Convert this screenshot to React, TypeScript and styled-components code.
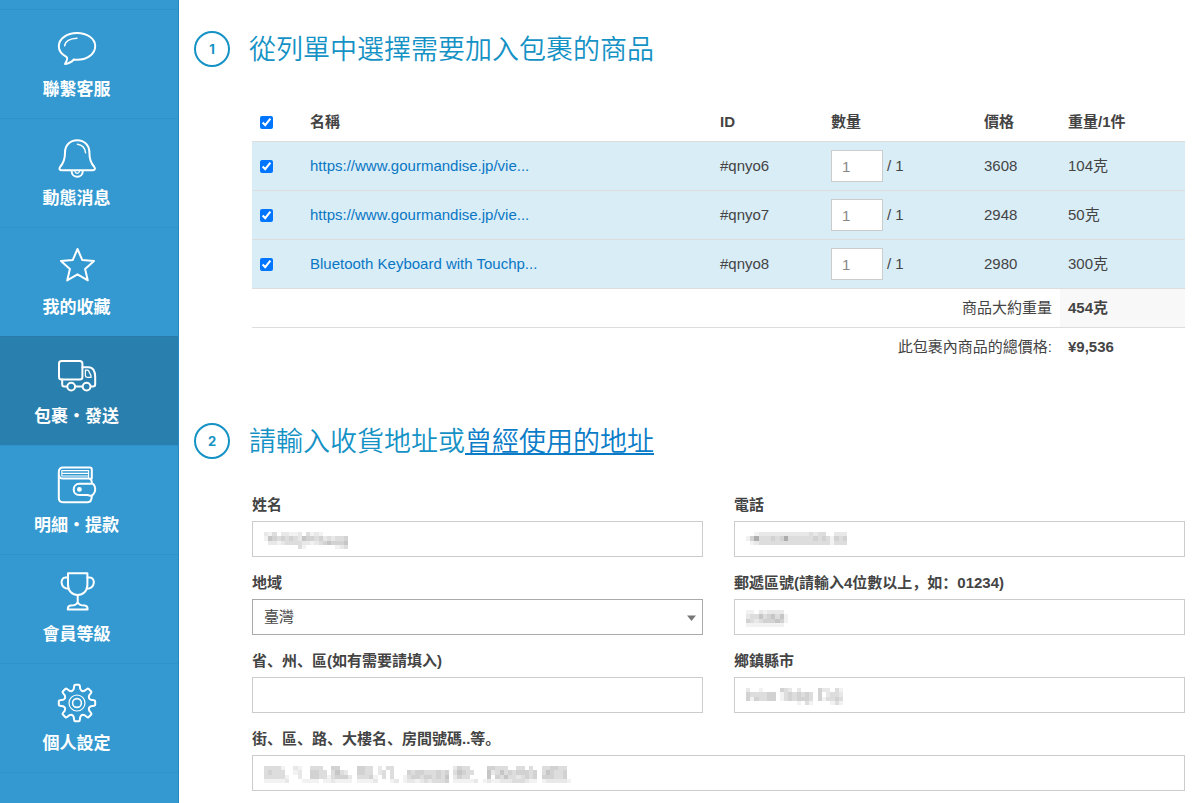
import React, { useState } from "react";
import styled, { createGlobalStyle } from "styled-components";

const GlobalStyle = createGlobalStyle`
  *, *::before, *::after { box-sizing: border-box; }
  body {
    margin: 0;
    background: #fff;
    color: #444;
    font: 15px/22px "Liberation Sans", "Noto Sans CJK SC", sans-serif;
  }
`;

const Page = styled.div`
  display: flex;
  min-height: 100vh;
`;

const Sidebar = styled.nav`
  flex: none;
  width: 179px;
  padding-top: 9px;
  background: #3399d0;
  border-right: 1px solid #2388c2;
`;

const MenuList = styled.ul`
  list-style: none;
  margin: 0;
  padding: 0;
  border-bottom: 1px solid #2f93c9;
`;

const MenuLink = styled.a<{ $active?: boolean }>`
  display: flex;
  flex-direction: column;
  align-items: center;
  gap: 9px;
  height: 109px;
  padding: 19px 25px 0 0;
  border-top: 1px solid ${(p) => (p.$active ? "#297aa6" : "#2f93c9")};
  background: ${(p) => (p.$active ? "#297fad" : "transparent")};
  color: #fff;
  font-size: 17px;
  font-weight: 700;
  line-height: 24px;
  text-decoration: none;
`;

const Icon = styled.svg`
  flex: none;
  width: 40px;
  height: 40px;
  overflow: visible;
  fill: none;
  stroke: #fff;
  stroke-width: 2;
  stroke-linecap: round;
  stroke-linejoin: round;
`;

const Main = styled.main`
  flex: 1;
  min-width: 0;
  padding: 31px 15px 12px;
`;

const StepHeader = styled.header`
  display: flex;
  align-items: center;
  gap: 19px;
  height: 36px;
`;

const StepNumber = styled.span`
  flex: none;
  display: flex;
  align-items: center;
  justify-content: center;
  width: 36px;
  height: 36px;
  border: 2px solid #1592c5;
  border-radius: 50%;
  color: #1592c5;
  font: 700 13px/20px Inter, sans-serif;
`;

const StepTitle = styled.h2`
  margin: 0;
  padding-bottom: 2px;
  color: #1592c5;
  font-family: "Noto Sans CJK SC", sans-serif;
  font-size: 27px;
  font-weight: 350;
  line-height: 36px;
`;

const TitleLink = styled.a`
  color: #0a7cc8;
  text-decoration: underline;
  text-decoration-thickness: 2px;
  text-underline-offset: 2px;
  text-decoration-skip-ink: none;
`;

const StepBody = styled.div`
  padding-left: 58px;
`;

const ItemStep = styled.section`
  margin-bottom: 57px;
`;

const ItemTable = styled.table`
  width: 100%;
  margin-top: 36px;
  table-layout: fixed;
  border-collapse: separate;
  border-spacing: 0;
`;

const Col = styled.col<{ $width?: number }>`
  width: ${(p) => (p.$width ? `${p.$width}px` : "auto")};
`;

const HeadCell = styled.th`
  height: 38px;
  padding: 0 8px;
  text-align: left;
  font-weight: 700;
`;

const ItemRow = styled.tr`
  background: #d9edf7;
`;

const Cell = styled.td`
  height: 49px;
  padding: 0 8px;
  border-top: 1px solid #ddd;
`;

const TotalLabel = styled.th`
  height: 39px;
  padding: 0 8px;
  border-top: 1px solid #ddd;
  text-align: right;
  font-weight: 400;
`;

const TotalValue = styled.td<{ $shaded?: boolean }>`
  height: 39px;
  padding: 0 8px;
  border-top: 1px solid #ddd;
  background: ${(p) => (p.$shaded ? "#f8f8f8" : "transparent")};
  font-weight: 700;
`;

const Checkbox = styled.input`
  display: block;
  width: 13px;
  height: 13px;
  margin: 1px 0 0;
  accent-color: #0075ff;
`;

const ItemLink = styled.a`
  color: #0a77c4;
  text-decoration: none;
`;

const Quantity = styled.div`
  display: flex;
  align-items: center;
  gap: 4px;
`;

const QuantityInput = styled.input`
  width: 52px;
  height: 32px;
  padding: 0 10px;
  border: 1px solid #ccc;
  border-radius: 0;
  background: #fff;
  color: #888;
  font: inherit;
`;

const AddressForm = styled.form`
  display: grid;
  grid-template-columns: 1fr 1fr;
  gap: 15px 31px;
  margin-top: 35px;
`;

const Field = styled.div<{ $wide?: boolean }>`
  display: flex;
  flex-direction: column;
  gap: 5px;
  grid-column: ${(p) => (p.$wide ? "1 / -1" : "auto")};
`;

const Label = styled.label`
  font-weight: 700;
`;

const Control = styled.div`
  position: relative;
`;

const TextInput = styled.input`
  display: block;
  width: 100%;
  height: 36px;
  padding: 0 11px;
  border: 1px solid #ccc;
  border-radius: 0;
  background: #fff;
  color: #555;
  font: inherit;
`;

const Select = styled.select`
  display: block;
  width: 100%;
  height: 36px;
  padding: 0 11px;
  border: 1px solid #aaa;
  border-radius: 0;
  background: #fff;
  color: #444;
  font: inherit;
  appearance: none;
`;

const SelectArrow = styled.svg`
  position: absolute;
  top: 16px;
  right: 7px;
  width: 9px;
  height: 6px;
  fill: #777;
  pointer-events: none;
`;

const MosaicLayer = styled.svg`
  position: absolute;
  top: 11px;
  left: 12px;
  height: 17px;
  pointer-events: none;
`;

/* Pixelated mask: each digit is the darkness of one block. */
const SHADES = ["none", "#f2f2f2", "#e8e8e8", "#dddddd", "#d2d2d2", "#c6c6c6", "#acacac"];

function Mosaic({ rows }: { rows: string[] }) {
  const columns = Math.max(...rows.map((row) => row.length));
  return (
    <MosaicLayer
      viewBox={`0 0 ${columns} 4`}
      width={Math.round(columns * 4.2)}
      preserveAspectRatio="none"
      shapeRendering="crispEdges"
      aria-hidden="true"
    >
      {rows.flatMap((row, y) =>
        [...row].map((shade, x) => (
          <rect key={`${x}-${y}`} x={x} y={y} width="1" height="1" fill={SHADES[Number(shade)]} />
        ))
      )}
    </MosaicLayer>
  );
}

const masks = {
  name: [
    "21302211203121000000",
    "15434343254434232334",
    "02212333322123454445",
    "00000000310000000123",
  ],
  phone: [
    "001222222222222323300222",
    "146333434633333343431434",
    "012333333333333333331333",
    "000000000000000000000000",
  ],
  zip: ["1102122220", "2335345351", "4323444541", "1111111110"],
  city: [
    "20010000432020000422031",
    "43333440134343430402332",
    "41433440134344430413343",
    "00000000000010310000131",
  ],
  street: [
    "3333100210033300440000443302033000000000000002433000044333003303003344330",
    "3433300120044330353200443302303000434433343403543300052353434443403543340",
    "3333310020044331344420333410303001344344343502433000050435332343404443340",
    "1111120001111011211110111120001201221232333401111120121122233321101222221",
  ],
};

const gearPath = (() => {
  const point = (angle: number, radius: number) => {
    const rad = ((angle - 90) * Math.PI) / 180;
    return `${(20 + radius * Math.cos(rad)).toFixed(2)} ${(20 + radius * Math.sin(rad)).toFixed(2)}`;
  };
  let d = `M${point(-13, 14.4)}`;
  for (let i = 0; i < 8; i++) {
    const a = i * 45;
    d += ` L${point(a - 9.5, 17.2)} Q${point(a - 9, 18.3)} ${point(a - 6, 18.3)}`;
    d += ` L${point(a + 6, 18.3)} Q${point(a + 9, 18.3)} ${point(a + 9.5, 17.2)}`;
    d += ` L${point(a + 13, 14.4)} Q${point(a + 22.5, 11.8)} ${point(a + 32, 14.4)}`;
  }
  return `${d}Z`;
})();

const icons = {
  chat: (
    <>
      <path d="M16.8 30.5C29.5 31.8 38.2 25.2 38.2 17.2C38.2 9.6 30.2 4 20 4S1.8 9.8 1.8 17.3C1.8 21.6 4.8 25.4 9.4 27.8C11.4 29 9.6 32.2 8 34.9C11.6 34.6 14.6 33 16.8 30.5Z" />
      <path d="M7.6 16.8C8.2 12.4 13 9.4 20 9.2" strokeWidth="1.4" />
    </>
  ),
  bell: (
    <>
      <path d="M20.2 2.3C12.8 2.3 8 7.6 8 14.5C8 22 6.4 25.4 3.2 28.8C1.8 30.6 2.4 32.2 4.4 32.2H36C38 32.2 38.6 30.6 37.2 28.8C34 25.4 32.4 22 32.4 14.5C32.4 7.6 27.6 2.3 20.2 2.3Z" />
      <path d="M14.6 33C14.8 40.8 25.6 40.8 25.8 33" />
      <path d="M18 33.4C18.4 36 22 36 22.4 33.4" strokeWidth="1.2" />
      <path d="M20.4 6.2C25 6.8 28 9.8 28.6 14.8" strokeWidth="1.4" />
    </>
  ),
  star: (
    <path d="M20.5 2L25.2 12.9L37 14L28.1 21.9L30.8 33.4L20.5 27.3L10.2 33.4L12.9 21.9L4 14L15.8 12.9Z" />
  ),
  truck: (
    <>
      <rect x="2" y="5" width="23.4" height="18.6" rx="2.6" />
      <path d="M5.2 23.6V28.4Q5.2 30.4 7.2 30.4H9.8M18.6 30.4H25M34 30.4H36Q38.2 30.4 38.2 28.2V21C38.2 15 36 11.2 31.4 11.2H25.4" />
      <path d="M28.4 14.2H30.2Q31.2 14.2 31.8 15.2L34 19.6V21.4H30.2Q28.4 21.4 28.4 19.6Z" strokeWidth="1.3" />
      <circle cx="14.2" cy="30.6" r="3.9" />
      <circle cx="29.6" cy="30.6" r="3.9" />
    </>
  ),
  wallet: (
    <>
      <path d="M34.8 13.6V4.6Q34.8 2.6 32.8 2.6H6C3.4 2.6 1.8 4.2 1.8 6.8V33C1.8 35.8 3.4 37.2 6 37.2H30.8C33.4 37.2 34.6 35.4 34.8 31.4M1.8 9.6C2 12.4 3.6 13.6 6 13.6H31.4C33.6 13.6 34.8 15 34.8 17.8" />
      <path d="M34.8 18.8H22.4C14.8 18.8 14.8 30 22.4 30H30.6C33 31 35.2 31 36.4 29.2C38.8 26.4 38.8 22 36.6 19.4Q35.6 18.4 34.8 18.8Z" />
      <circle cx="22.4" cy="24.4" r="2.4" fill="#fff" stroke="none" />
      <path d="M4.8 5.6H31.6M4.8 8.4H31.6M4.8 11H31.6M4.8 5.6V11M31.6 5.6V13" strokeWidth="1.1" />
    </>
  ),
  trophy: (
    <>
      <path d="M11 -0.8H30.4V10.4C30.4 17.4 26 21 20.7 21S11 17.4 11 10.4Z" />
      <path d="M11 3.6H8.6C2.8 3.6 2.8 14.6 11.8 14.8M30.4 3.6H32.8C38.6 3.6 38.6 14.6 29.6 14.8" />
      <path d="M20.7 21V28M20.7 28C20 30.2 17.6 31.6 13.6 31.6Q10.8 31.8 10.8 35.4H30.6Q30.6 31.8 27.8 31.6C23.8 31.6 21.4 30.2 20.7 28" />
    </>
  ),
  gear: (
    <>
      <path d={gearPath} />
      <circle cx="20" cy="20" r="8" strokeWidth="1.2" />
      <circle cx="20" cy="20" r="4.4" strokeWidth="1.6" />
    </>
  ),
};

const menu: { label: string; icon: keyof typeof icons; active?: boolean }[] = [
  { label: "聯繫客服", icon: "chat" },
  { label: "動態消息", icon: "bell" },
  { label: "我的收藏", icon: "star" },
  { label: "包裹・發送", icon: "truck", active: true },
  { label: "明細・提款", icon: "wallet" },
  { label: "會員等級", icon: "trophy" },
  { label: "個人設定", icon: "gear" },
];

const items = [
  { id: "#qnyo6", name: "https://www.gourmandise.jp/vie...", price: "3608", weight: "104克" },
  { id: "#qnyo7", name: "https://www.gourmandise.jp/vie...", price: "2948", weight: "50克" },
  { id: "#qnyo8", name: "Bluetooth Keyboard with Touchp...", price: "2980", weight: "300克" },
];

function MaskedField({ id, label, mask, wide }: { id: string; label: string; mask?: string[]; wide?: boolean }) {
  const [value, setValue] = useState("");
  return (
    <Field $wide={wide}>
      <Label htmlFor={id}>{label}</Label>
      <Control>
        <TextInput id={id} type="text" value={value} onChange={(e) => setValue(e.target.value)} />
        {mask && value === "" && <Mosaic rows={mask} />}
      </Control>
    </Field>
  );
}

export default function App() {
  const [checked, setChecked] = useState<string[]>(items.map((item) => item.id));
  const toggle = (id: string) =>
    setChecked((now) => (now.includes(id) ? now.filter((x) => x !== id) : [...now, id]));
  const allChecked = checked.length === items.length;

  return (
    <>
      <GlobalStyle />
      <Page lang="zh-Hans">
        <Sidebar>
          <MenuList>
            {menu.map((entry) => (
              <li key={entry.label}>
                <MenuLink href="#" $active={entry.active} aria-current={entry.active ? "page" : undefined}>
                  <Icon viewBox="0 0 40 40" aria-hidden="true">
                    {icons[entry.icon]}
                  </Icon>
                  {entry.label}
                </MenuLink>
              </li>
            ))}
          </MenuList>
        </Sidebar>

        <Main>
          <ItemStep>
            <StepHeader>
              <StepNumber>1</StepNumber>
              <StepTitle>從列單中選擇需要加入包裹的商品</StepTitle>
            </StepHeader>
            <StepBody>
              <ItemTable>
                <colgroup>
                  <Col $width={50} />
                  <Col />
                  <Col $width={111} />
                  <Col $width={153} />
                  <Col $width={84} />
                  <Col $width={125} />
                </colgroup>
                <thead>
                  <tr>
                    <HeadCell>
                      <Checkbox
                        type="checkbox"
                        aria-label="全選"
                        checked={allChecked}
                        onChange={() => setChecked(allChecked ? [] : items.map((item) => item.id))}
                      />
                    </HeadCell>
                    <HeadCell>名稱</HeadCell>
                    <HeadCell>ID</HeadCell>
                    <HeadCell>數量</HeadCell>
                    <HeadCell>價格</HeadCell>
                    <HeadCell>重量/1件</HeadCell>
                  </tr>
                </thead>
                <tbody>
                  {items.map((item) => (
                    <ItemRow key={item.id}>
                      <Cell>
                        <Checkbox
                          type="checkbox"
                          aria-label={item.id}
                          checked={checked.includes(item.id)}
                          onChange={() => toggle(item.id)}
                        />
                      </Cell>
                      <Cell>
                        <ItemLink href="#">{item.name}</ItemLink>
                      </Cell>
                      <Cell>{item.id}</Cell>
                      <Cell>
                        <Quantity>
                          <QuantityInput type="text" inputMode="numeric" aria-label="數量" defaultValue="1" />
                          <span>/ 1</span>
                        </Quantity>
                      </Cell>
                      <Cell>{item.price}</Cell>
                      <Cell>{item.weight}</Cell>
                    </ItemRow>
                  ))}
                </tbody>
                <tfoot>
                  <tr>
                    <TotalLabel colSpan={5} scope="row">商品大約重量</TotalLabel>
                    <TotalValue $shaded>454克</TotalValue>
                  </tr>
                  <tr>
                    <TotalLabel colSpan={5} scope="row">此包裹內商品的總價格:</TotalLabel>
                    <TotalValue>¥9,536</TotalValue>
                  </tr>
                </tfoot>
              </ItemTable>
            </StepBody>
          </ItemStep>

          <section>
            <StepHeader>
              <StepNumber>2</StepNumber>
              <StepTitle>
                請輸入收貨地址或<TitleLink href="#">曾經使用的地址</TitleLink>
              </StepTitle>
            </StepHeader>
            <StepBody>
              <AddressForm>
                <MaskedField id="name" label="姓名" mask={masks.name} />
                <MaskedField id="phone" label="電話" mask={masks.phone} />
                <Field>
                  <Label htmlFor="region">地域</Label>
                  <Control>
                    <Select id="region" defaultValue="tw">
                      <option value="tw">臺灣</option>
                    </Select>
                    <SelectArrow viewBox="0 0 9 6" aria-hidden="true">
                      <path d="M0 0.5H9L4.5 6Z" />
                    </SelectArrow>
                  </Control>
                </Field>
                <MaskedField id="zip" label="郵遞區號(請輸入4位數以上，如：01234)" mask={masks.zip} />
                <MaskedField id="state" label="省、州、區(如有需要請填入)" />
                <MaskedField id="city" label="鄉鎮縣市" mask={masks.city} />
                <MaskedField id="street" label="街、區、路、大樓名、房間號碼..等。" mask={masks.street} wide />
              </AddressForm>
            </StepBody>
          </section>
        </Main>
      </Page>
    </>
  );
}
